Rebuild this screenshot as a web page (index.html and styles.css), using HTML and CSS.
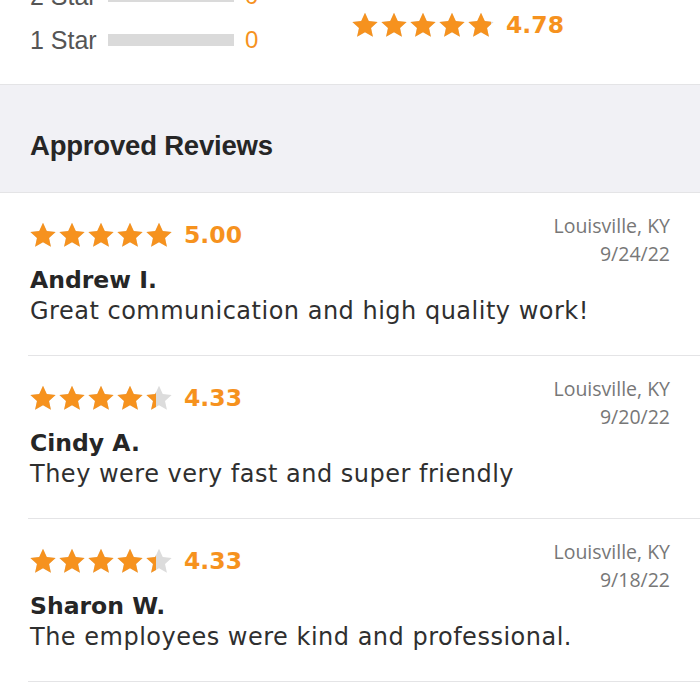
FILE: index.html
```html
<!DOCTYPE html>
<html lang="en">
<head>
<meta charset="utf-8">
<title>Approved Reviews</title>
<link rel="stylesheet" href="styles.css">
</head>
<body>
<svg width="0" height="0" class="defs" aria-hidden="true">
  <defs>
    <path id="star" d="M12 1.2l3.2 6.9 7.5.8-5.6 5.1 1.6 7.4L12 17.6l-6.7 3.8 1.6-7.4-5.6-5.1 7.5-.8z"/>
  </defs>
</svg>

<section class="summary">
  <div class="bars">
    <div class="bar-row">
      <span class="bar-label">2 Star</span>
      <span class="bar-track"></span>
      <span class="bar-count">0</span>
    </div>
    <div class="bar-row">
      <span class="bar-label">1 Star</span>
      <span class="bar-track"></span>
      <span class="bar-count">0</span>
    </div>
  </div>
  <div class="overall">
    <div class="rating">
      <div class="stars">
        <div class="star-row grey"><svg viewBox="1 1 22 21"><use href="#star"/></svg><svg viewBox="1 1 22 21"><use href="#star"/></svg><svg viewBox="1 1 22 21"><use href="#star"/></svg><svg viewBox="1 1 22 21"><use href="#star"/></svg><svg viewBox="1 1 22 21"><use href="#star"/></svg></div>
        <div class="star-fill" style="width:95.6%"><div class="star-row orange"><svg viewBox="1 1 22 21"><use href="#star"/></svg><svg viewBox="1 1 22 21"><use href="#star"/></svg><svg viewBox="1 1 22 21"><use href="#star"/></svg><svg viewBox="1 1 22 21"><use href="#star"/></svg><svg viewBox="1 1 22 21"><use href="#star"/></svg></div></div>
      </div>
      <span class="score">4.78</span>
    </div>
  </div>
</section>

<header class="section-head">
  <h2>Approved Reviews</h2>
</header>

<ul class="reviews">
  <li class="review">
    <div class="rating">
      <div class="stars">
        <div class="star-row grey"><svg viewBox="1 1 22 21"><use href="#star"/></svg><svg viewBox="1 1 22 21"><use href="#star"/></svg><svg viewBox="1 1 22 21"><use href="#star"/></svg><svg viewBox="1 1 22 21"><use href="#star"/></svg><svg viewBox="1 1 22 21"><use href="#star"/></svg></div>
        <div class="star-fill" style="width:100%"><div class="star-row orange"><svg viewBox="1 1 22 21"><use href="#star"/></svg><svg viewBox="1 1 22 21"><use href="#star"/></svg><svg viewBox="1 1 22 21"><use href="#star"/></svg><svg viewBox="1 1 22 21"><use href="#star"/></svg><svg viewBox="1 1 22 21"><use href="#star"/></svg></div></div>
      </div>
      <span class="score">5.00</span>
    </div>
    <div class="meta">
      <div>Louisville, KY</div>
      <div>9/24/22</div>
    </div>
    <div class="name">Andrew I.</div>
    <p class="text">Great communication and high quality work!</p>
  </li>
  <li class="review">
    <div class="rating">
      <div class="stars">
        <div class="star-row grey"><svg viewBox="1 1 22 21"><use href="#star"/></svg><svg viewBox="1 1 22 21"><use href="#star"/></svg><svg viewBox="1 1 22 21"><use href="#star"/></svg><svg viewBox="1 1 22 21"><use href="#star"/></svg><svg viewBox="1 1 22 21"><use href="#star"/></svg></div>
        <div class="star-fill" style="width:86.6%"><div class="star-row orange"><svg viewBox="1 1 22 21"><use href="#star"/></svg><svg viewBox="1 1 22 21"><use href="#star"/></svg><svg viewBox="1 1 22 21"><use href="#star"/></svg><svg viewBox="1 1 22 21"><use href="#star"/></svg><svg viewBox="1 1 22 21"><use href="#star"/></svg></div></div>
      </div>
      <span class="score">4.33</span>
    </div>
    <div class="meta">
      <div>Louisville, KY</div>
      <div>9/20/22</div>
    </div>
    <div class="name">Cindy A.</div>
    <p class="text">They were very fast and super friendly</p>
  </li>
  <li class="review">
    <div class="rating">
      <div class="stars">
        <div class="star-row grey"><svg viewBox="1 1 22 21"><use href="#star"/></svg><svg viewBox="1 1 22 21"><use href="#star"/></svg><svg viewBox="1 1 22 21"><use href="#star"/></svg><svg viewBox="1 1 22 21"><use href="#star"/></svg><svg viewBox="1 1 22 21"><use href="#star"/></svg></div>
        <div class="star-fill" style="width:86.6%"><div class="star-row orange"><svg viewBox="1 1 22 21"><use href="#star"/></svg><svg viewBox="1 1 22 21"><use href="#star"/></svg><svg viewBox="1 1 22 21"><use href="#star"/></svg><svg viewBox="1 1 22 21"><use href="#star"/></svg><svg viewBox="1 1 22 21"><use href="#star"/></svg></div></div>
      </div>
      <span class="score">4.33</span>
    </div>
    <div class="meta">
      <div>Louisville, KY</div>
      <div>9/18/22</div>
    </div>
    <div class="name">Sharon W.</div>
    <p class="text">The employees were kind and professional.</p>
  </li>
</ul>
</body>
</html>
```

FILE: styles.css
```css
* { box-sizing: border-box; }

html, body {
  margin: 0;
  padding: 0;
  background: #ffffff;
  overflow: hidden;
}

body {
  width: 700px;
  font-family: "Open Sans", "Liberation Sans", sans-serif;
  color: #2f2f2f;
}

.defs { position: absolute; width: 0; height: 0; }

/* ---------- summary ---------- */
.summary {
  display: flex;
  margin-top: -26px;
  padding: 0 0 22px 30px;
  border-bottom: 1px solid #e4e4e6;
}

.bars {
  display: flex;
  flex-direction: column;
  width: 322px;
}

.bar-row {
  display: flex;
  align-items: center;
  height: 44px;
}

.bar-label {
  width: 78px;
  font-family: "Liberation Sans", "Open Sans", sans-serif;
  font-size: 25px;
  color: #555555;
}

.bar-track {
  width: 126px;
  height: 12px;
  background: #dadada;
}

.bar-count {
  margin-left: 11px;
  font-family: "Liberation Sans", sans-serif;
  font-size: 24px;
  color: #f6921e;
}

.overall {
  margin-top: 38px;
}

/* ---------- rating ---------- */
.rating {
  display: flex;
  align-items: center;
  gap: 9px;
}

.stars {
  position: relative;
  width: 145px;
  height: 26px;
}

.star-row {
  display: flex;
  gap: 3px;
  width: 145px;
}

.star-row svg {
  flex: none;
  width: 26px;
  height: 26px;
}

.star-row.grey svg { fill: #dcdcdc; }
.star-row.orange svg { fill: #f6921e; }

.star-fill {
  position: absolute;
  top: 0;
  left: 0;
  height: 26px;
  overflow: hidden;
}

.score {
  font-family: "DejaVu Sans", sans-serif;
  font-weight: 700;
  font-size: 23.5px;
  line-height: 26px;
  color: #f6921e;
}

/* ---------- section head ---------- */
.section-head {
  height: 108px;
  display: flex;
  align-items: center;
  padding: 0 30px;
  background: #f1f1f5;
  border-bottom: 1px solid #e4e4e6;
}

.section-head h2 {
  margin: 0;
  padding-top: 14px;
  font-family: "Liberation Sans", "Roboto", sans-serif;
  font-weight: 700;
  font-size: 27.5px;
  letter-spacing: -0.2px;
  color: #262626;
}

/* ---------- reviews ---------- */
.reviews {
  list-style: none;
  margin: 0;
  padding: 0;
}

.review {
  display: grid;
  grid-template-columns: 1fr auto;
  margin-left: 28px;
  padding: 19px 30px 29px 2px;
  border-bottom: 1px solid #e4e4e6;
}

.review .rating {
  grid-column: 1;
  grid-row: 1;
  margin-top: 10px;
  height: 26px;
}

.meta {
  grid-column: 2;
  grid-row: 1 / span 2;
  align-self: start;
  text-align: right;
  font-family: "Open Sans", sans-serif;
  font-size: 19.5px;
  line-height: 28px;
  color: #777777;
}

.name {
  grid-column: 1;
  grid-row: 2;
  margin-top: 17px;
  font-family: "DejaVu Sans", sans-serif;
  font-weight: 700;
  font-size: 23.5px;
  line-height: 30px;
  color: #262626;
}

.text {
  grid-column: 1 / -1;
  grid-row: 3;
  margin: 1px 0 0;
  font-family: "DejaVu Sans", sans-serif;
  font-size: 24px;
  letter-spacing: 0.5px;
  line-height: 30px;
  color: #2f2f2f;
}
```
